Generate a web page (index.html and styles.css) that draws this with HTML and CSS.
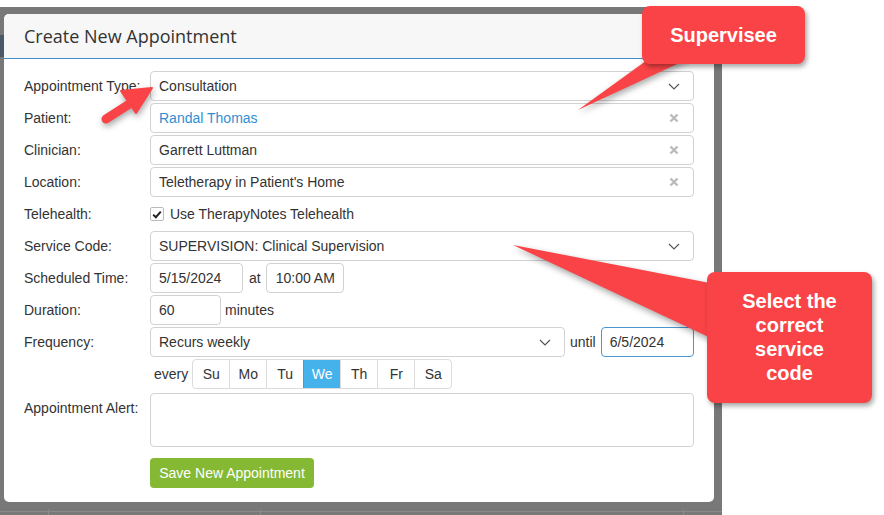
FILE: index.html
```html
<!DOCTYPE html>
<html>
<head>
<meta charset="utf-8">
<link rel="stylesheet" href="styles.css">
</head>
<body>
<div class="backdrop">
  <div class="edge"><div class="edge-bar"></div></div>
  <div class="modal">
    <div class="modal-header">Create New Appointment</div>
    <div class="modal-body">
      <div class="row">
        <div class="label">Appointment Type:</div>
        <div class="field"><span>Consultation</span>
          <svg class="chev" width="12" height="7" viewBox="0 0 12 7"><path d="M1 1 L6 6 L11 1" fill="none" stroke="#555" stroke-width="1.2"/></svg></div>
      </div>
      <div class="row">
        <div class="label">Patient:</div>
        <div class="field"><span class="link">Randal Thomas</span>
          <svg class="x" width="10" height="10" viewBox="0 0 10 10"><path d="M1.5 1.5 L8.5 8.5 M8.5 1.5 L1.5 8.5" stroke="#bbb" stroke-width="2.4"/></svg></div>
      </div>
      <div class="row">
        <div class="label">Clinician:</div>
        <div class="field"><span>Garrett Luttman</span>
          <svg class="x" width="10" height="10" viewBox="0 0 10 10"><path d="M1.5 1.5 L8.5 8.5 M8.5 1.5 L1.5 8.5" stroke="#bbb" stroke-width="2.4"/></svg></div>
      </div>
      <div class="row">
        <div class="label">Location:</div>
        <div class="field"><span>Teletherapy in Patient's Home</span>
          <svg class="x" width="10" height="10" viewBox="0 0 10 10"><path d="M1.5 1.5 L8.5 8.5 M8.5 1.5 L1.5 8.5" stroke="#bbb" stroke-width="2.4"/></svg></div>
      </div>
      <div class="row">
        <div class="label">Telehealth:</div>
        <div class="check"><span class="box"><svg width="10" height="9" viewBox="0 0 10 9"><path d="M1.2 4.6 L3.8 7.2 L8.8 1.6" fill="none" stroke="#222" stroke-width="2"/></svg></span>Use TherapyNotes Telehealth</div>
      </div>
      <div class="row">
        <div class="label">Service Code:</div>
        <div class="field"><span>SUPERVISION: Clinical Supervision</span>
          <svg class="chev" width="12" height="7" viewBox="0 0 12 7"><path d="M1 1 L6 6 L11 1" fill="none" stroke="#555" stroke-width="1.2"/></svg></div>
      </div>
      <div class="row">
        <div class="label">Scheduled Time:</div>
        <div class="field date">5/15/2024</div>
        <span class="inline-text at">at</span>
        <div class="field time">10:00 AM</div>
      </div>
      <div class="row">
        <div class="label">Duration:</div>
        <div class="field dur">60</div>
        <span class="inline-text mins">minutes</span>
      </div>
      <div class="row">
        <div class="label">Frequency:</div>
        <div class="field freq"><span>Recurs weekly</span>
          <svg class="chev" width="12" height="7" viewBox="0 0 12 7"><path d="M1 1 L6 6 L11 1" fill="none" stroke="#555" stroke-width="1.2"/></svg></div>
        <span class="inline-text until">until</span>
        <div class="field date focus">6/5/2024</div>
      </div>
      <div class="row days-row">
        <div class="label"></div>
        <span class="inline-text every">every</span>
        <div class="days">
          <div class="day">Su</div><div class="day">Mo</div><div class="day">Tu</div><div class="day active">We</div><div class="day">Th</div><div class="day">Fr</div><div class="day">Sa</div>
        </div>
      </div>
      <div class="row alert-row">
        <div class="label">Appointment Alert:</div>
        <div class="field textarea"></div>
      </div>
      <div class="row save-row">
        <div class="label"></div>
        <div class="save">Save New Appointment</div>
      </div>
    </div>
  </div>
  <div class="edge-right"></div>
</div>

<svg class="annotations" width="884" height="515" viewBox="0 0 884 515">
  <polygon points="650,58 690,58 578,110" fill="#f94346"/>
  <polygon points="513,245 715,284 715,340" fill="#f94346"/>
  <line x1="106" y1="119" x2="134" y2="101" stroke="#f94346" stroke-width="9" stroke-linecap="round"/>
  <polygon points="152,88 121,91 136,113" fill="#f94346" stroke="#f94346" stroke-width="2" stroke-linejoin="round"/>
</svg>
<div class="callout callout-1">Supervisee</div>
<div class="callout callout-2">Select the<br>correct<br>service<br>code</div>
</body>
</html>
```

FILE: styles.css
```css
html, body {
  margin: 0;
  padding: 0;
  background: #ffffff;
}
body {
  position: relative;
  width: 884px;
  height: 515px;
  overflow: hidden;
  font-family: "Liberation Sans", Arial, sans-serif;
  font-size: 14px;
  color: #333;
}
.backdrop {
  margin-top: 7px;
  width: 722px;
  height: 508px;
  display: flex;
  background-color: #787878;
  background-image:
    linear-gradient(to bottom, transparent 2px, #8a8a8a 2px, #8a8a8a 3px, transparent 3px),
    linear-gradient(to right, transparent 48px, #8a8a8a 48px, #8a8a8a 49px, transparent 49px),
    linear-gradient(to right, transparent 260px, #8a8a8a 260px, #8a8a8a 261px, transparent 261px),
    linear-gradient(to right, transparent 683px, #8a8a8a 683px, #8a8a8a 684px, transparent 684px);
  background-size: 100% 6px;
  background-position: 0 100%;
  background-repeat: no-repeat;
}
.edge {
  width: 4px;
  flex: none;
}
.edge-bar {
  margin-top: 28px;
  height: 22px;
  background: #4b5866;
}
.edge-right {
  flex: 1;
}
.modal {
  margin-top: 7px;
  width: 710px;
  height: 488px;
  flex: none;
  background: #fff;
  border-radius: 5px;
  overflow: hidden;
}
.modal-header {
  height: 44px;
  line-height: 44px;
  padding-left: 20px;
  background: #f7f7f7;
  border-bottom: 1px solid #3d8ec6;
  font-family: "Open Sans", "Noto Sans", sans-serif;
  font-size: 18px;
  color: #333;
}
.modal-body {
  padding: 12px 20px 0 20px;
}
.row {
  display: flex;
  align-items: center;
  height: 30px;
  margin-bottom: 2px;
}
.label {
  width: 126px;
  flex: none;
  color: #333;
}
.field {
  box-sizing: border-box;
  height: 30px;
  flex: 1;
  border: 1px solid #d2d2d2;
  border-radius: 4px;
  padding: 0 12px 0 8px;
  display: flex;
  align-items: center;
  justify-content: space-between;
  color: #333;
  background: #fff;
  white-space: nowrap;
}
.link {
  color: #2f8fd4;
}
.chev {
  margin-right: 1px;
}
.x {
  margin-right: 2px;
}
.check {
  display: flex;
  align-items: center;
  color: #333;
}
.box {
  box-sizing: border-box;
  width: 14px;
  height: 14px;
  border: 1px solid #bbb;
  border-radius: 2px;
  display: flex;
  align-items: center;
  justify-content: center;
  margin-right: 6px;
}
.field.date {
  flex: none;
  width: 93px;
}
.field.time {
  flex: none;
  width: 78px;
  padding: 0 0 0 9px;
}
.field.dur {
  flex: none;
  width: 71px;
}
.field.freq {
  flex: none;
  width: 415px;
}
.field.focus {
  border-color: #4a96d2;
}
.inline-text {
  color: #333;
}
.at {
  margin: 0 5px 0 6px;
}
.mins {
  margin-left: 4px;
}
.until {
  margin: 0 5px 0 5px;
}
.every {
  margin: 0 4px 0 4px;
}
.days-row {
  margin-bottom: 4px;
}
.days {
  display: flex;
  height: 30px;
  border: 1px solid #dcdcdc;
  border-radius: 4px;
  box-sizing: border-box;
  overflow: hidden;
}
.day {
  width: 36px;
  display: flex;
  align-items: center;
  justify-content: center;
  color: #333;
  border-left: 1px solid #dcdcdc;
}
.day:first-child {
  border-left: none;
}
.day.active {
  background: #46b2ec;
  color: #fff;
  border-left-color: #3aa0d8;
}
.alert-row {
  height: 54px;
  align-items: flex-start;
  margin-bottom: 11px;
}
.alert-row .label {
  padding-top: 7px;
}
.field.textarea {
  height: 54px;
}
.save {
  width: 164px;
  height: 30px;
  box-sizing: border-box;
  background: #85b934;
  color: #fff;
  border-radius: 4px;
  display: flex;
  align-items: center;
  justify-content: center;
  font-size: 14px;
}
.annotations {
  position: absolute;
  left: 0;
  top: 0;
  filter: drop-shadow(1px 3px 3px rgba(0, 0, 0, 0.35));
}
.callout {
  position: absolute;
  background: #f94346;
  color: #fff;
  font-family: "Liberation Sans", Arial, sans-serif;
  font-weight: bold;
  font-size: 20px;
  text-align: center;
  border-radius: 8px;
  box-shadow: 2px 3px 5px rgba(0, 0, 0, 0.35);
}
.callout-1 {
  left: 642px;
  top: 6px;
  width: 163px;
  height: 58px;
  line-height: 58px;
}
.callout-2 {
  left: 707px;
  top: 272px;
  width: 165px;
  height: 131px;
  line-height: 24px;
  box-sizing: border-box;
  padding-top: 17px;
}
```
